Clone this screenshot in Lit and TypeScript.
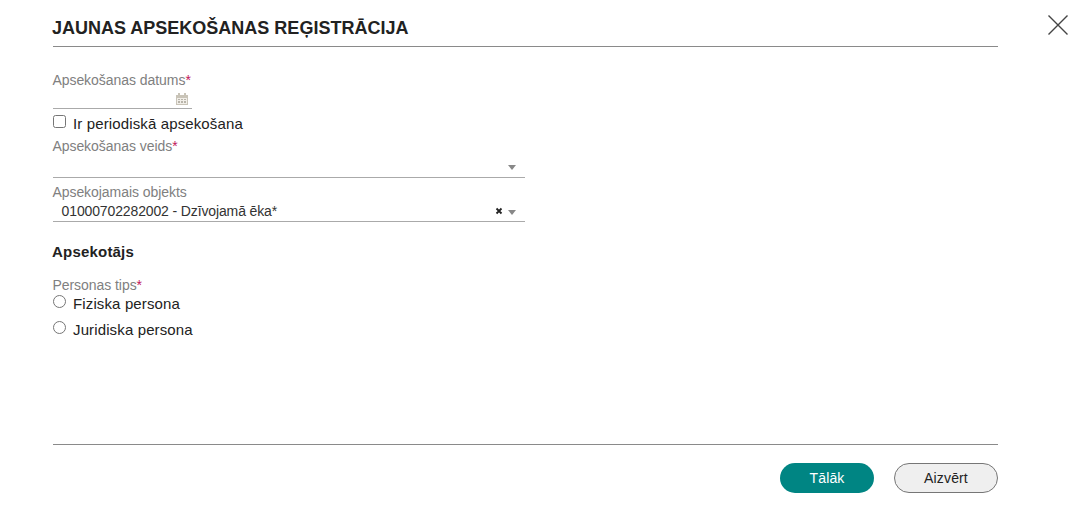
import { LitElement, html, css } from "lit";
import { customElement } from "lit/decorators.js";

@customElement("app-root")
export class AppRoot extends LitElement {
  static styles = css`
    :host { display: block; position: relative; width: 1086px; height: 512px; background: #fff; font-family: "Liberation Sans", Arial, sans-serif; color: #222; overflow: hidden; }
    .dialog { display: flex; flex-direction: column; width: 945px; height: 512px; margin-left: 53px; box-sizing: border-box; }
    .title { height: 46px; border-bottom: 1px solid #8a8a8a; font-size: 18px; font-weight: 700; line-height: 21px; color: #222; display: flex; align-items: flex-end; }
    .title span { padding-bottom: 7px; margin-left: -1px; }
    .form { flex: 1; padding-top: 25px; display: flex; flex-direction: column; }
    .label { font-size: 14px; line-height: 16px; color: #808080; letter-spacing: -0.05px; margin-left: -0.6px; }
    .req { color: #c2185b; }
    .field { border-bottom: 1px solid #aaa; display: flex; align-items: center; }
    .date { width: 139px; height: 20px; justify-content: flex-end; }
    .date svg { margin-right: 4px; margin-top: 2px; }
    .sel { width: 472px; font-size: 14px; color: #333; letter-spacing: -0.13px; }
    .sel1 { height: 23px; }
    .sel2 { height: 21px; }
    .sel .value { flex: 1; padding-left: 8.6px; line-height: 20px; }
    .arrow { width: 0; height: 0; border-left: 4px solid transparent; border-right: 4px solid transparent; border-top: 5px solid #888; margin-right: 9px; margin-top: 3px; }
    .clear { width: 8px; height: 8px; margin-right: 5px; display: block; }
    .check { display: flex; align-items: center; font-size: 15px; line-height: 17px; height: 26px; color: #222; letter-spacing: 0.13px; }
    .first { margin-top: 1px; }
    .box { width: 13px; height: 13px; box-sizing: border-box; border: 1px solid #767676; border-radius: 2.5px; margin-right: 7px; margin-top: -3px; background: #fff; flex: none; }
    .circle { width: 13px; height: 13px; box-sizing: border-box; border: 1px solid #767676; border-radius: 50%; margin-right: 7px; margin-top: -4px; background: #fff; flex: none; }
    .veids { margin-top: 2px; }
    .obj { margin-top: 6px; }
    .h { font-size: 15px; font-weight: 700; color: #222; line-height: 17px; margin-top: 21px; margin-bottom: 17px; margin-left: -1px; letter-spacing: 0.2px; }
    .radios { margin-top: -3px; display: flex; flex-direction: column; }
    .foot { height: 49px; border-top: 1px solid #8a8a8a; display: flex; justify-content: flex-end; gap: 20px; padding-top: 18px; }
    .btn { height: 30px; border-radius: 15px; font: 14px/30px "Liberation Sans", Arial, sans-serif; letter-spacing: 0.15px; text-align: center; box-sizing: border-box; padding: 0; }
    .primary { width: 94px; background: #008583; color: #fff; border: none; }
    .secondary { width: 104px; background: #efefef; color: #222; border: 1px solid #767676; line-height: 28px; }
    .close { position: absolute; left: 1048px; top: 15px; width: 20px; height: 20px; }
  `;

  render() {
    return html`
      <div class="dialog">
        <div class="title"><span>JAUNAS APSEKOŠANAS REĢISTRĀCIJA</span></div>
        <div class="form">
          <div class="label">Apsekošanas datums<span class="req">*</span></div>
          <div class="field date">
            <svg width="12" height="12" viewBox="0 0 12 12">
              <path fill="#c9c4b8" d="M0 2h2V0h2v2h4V0h2v2h2v10H0z"/>
              <path fill="#f1eee8" d="M1 5h10v6H1z"/>
              <path fill="#b8b4aa" d="M2 6h2v1H2zM5 6h2v1H5zM8 6h2v1H8zM2 8h2v2H2zM5 8h2v2H5zM8 8h2v2H8z"/>
            </svg>
          </div>
          <div class="check first"><span class="box"></span>Ir periodiskā apsekošana</div>
          <div class="label veids">Apsekošanas veids<span class="req">*</span></div>
          <div class="field sel sel1"><span class="value"></span><span class="arrow"></span></div>
          <div class="label obj">Apsekojamais objekts</div>
          <div class="field sel sel2"><span class="value">01000702282002 - Dzīvojamā ēka*</span>
            <svg class="clear" viewBox="0 0 8 8"><path d="M1.5 1.5l5 5M6.5 1.5l-5 5" stroke="#222" stroke-width="1.8"/></svg>
            <span class="arrow"></span></div>
          <div class="h">Apsekotājs</div>
          <div class="label">Personas tips<span class="req">*</span></div>
          <div class="radios">
            <div class="check"><span class="circle"></span>Fiziska persona</div>
            <div class="check"><span class="circle"></span>Juridiska persona</div>
          </div>
        </div>
        <div class="foot">
          <button class="btn primary">Tālāk</button>
          <button class="btn secondary">Aizvērt</button>
        </div>
      </div>
      <svg class="close" viewBox="0 0 20 20"><path d="M0.5 0.5L19.5 19.5M19.5 0.5L0.5 19.5" stroke="#444" stroke-width="1.4" fill="none"/></svg>
    `;
  }
}
